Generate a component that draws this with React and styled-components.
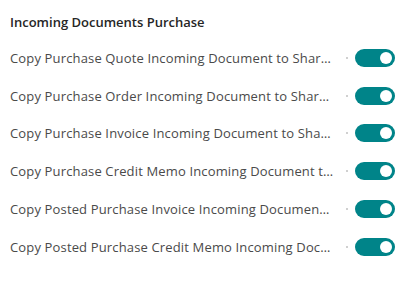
import styled, { createGlobalStyle } from "styled-components";

const GlobalStyle = createGlobalStyle`
  body {
    margin: 0;
    background: #ffffff;
    font-family: "Segoe UI", "Open Sans", "Noto Sans", sans-serif;
  }
`;

const rows = [
  "Copy Purchase Quote Incoming Document to SharePoint",
  "Copy Purchase Order Incoming Document to SharePoint",
  "Copy Purchase Invoice Incoming Document to SharePoint",
  "Copy Purchase Credit Memo Incoming Document to SharePoint",
  "Copy Posted Purchase Invoice Incoming Document to SharePoint",
  "Copy Posted Purchase Credit Memo Incoming Document to SharePoint",
];

export default function App() {
  return (
    <>
      <GlobalStyle />
      <Section>
        <Title>Incoming Documents Purchase</Title>
        <List>
          {rows.map((r) => (
            <Row key={r}>
              <Label>{r}</Label>
              <Dot />
              <Toggle $on />
            </Row>
          ))}
        </List>
      </Section>
    </>
  );
}

const Section = styled.div`
  padding: 13px 19px 0 10px;
  width: 414px;
  box-sizing: border-box;
`;

const Title = styled.div`
  font-size: 13px;
  font-weight: 600;
  color: #262626;
  line-height: 18px;
`;

const List = styled.div`
  display: flex;
  flex-direction: column;
  margin-top: 8px;
`;

const Row = styled.div`
  display: flex;
  align-items: center;
  height: 37.8px;
`;

const Label = styled.div`
  flex: 1;
  min-width: 0;
  font-size: 13px;
  letter-spacing: 0.15px;
  color: #4a4a4a;
  white-space: nowrap;
  overflow: hidden;
  text-overflow: ellipsis;
  padding-right: 12px;
`;

const Dot = styled.span`
  width: 2px;
  height: 2px;
  background: #d0d0d0;
  margin-right: 7px;
`;

const Toggle = styled.span`
  position: relative;
  width: 40px;
  height: 18px;
  border-radius: 9px;
  background: ${(p) => (p.$on ? "#008489" : "#ffffff")};
  flex-shrink: 0;
  &::after {
    content: "";
    position: absolute;
    top: 3px;
    left: ${(p) => (p.$on ? "25px" : "3px")};
    width: 12px;
    height: 12px;
    border-radius: 50%;
    background: #ffffff;
  }
`;
